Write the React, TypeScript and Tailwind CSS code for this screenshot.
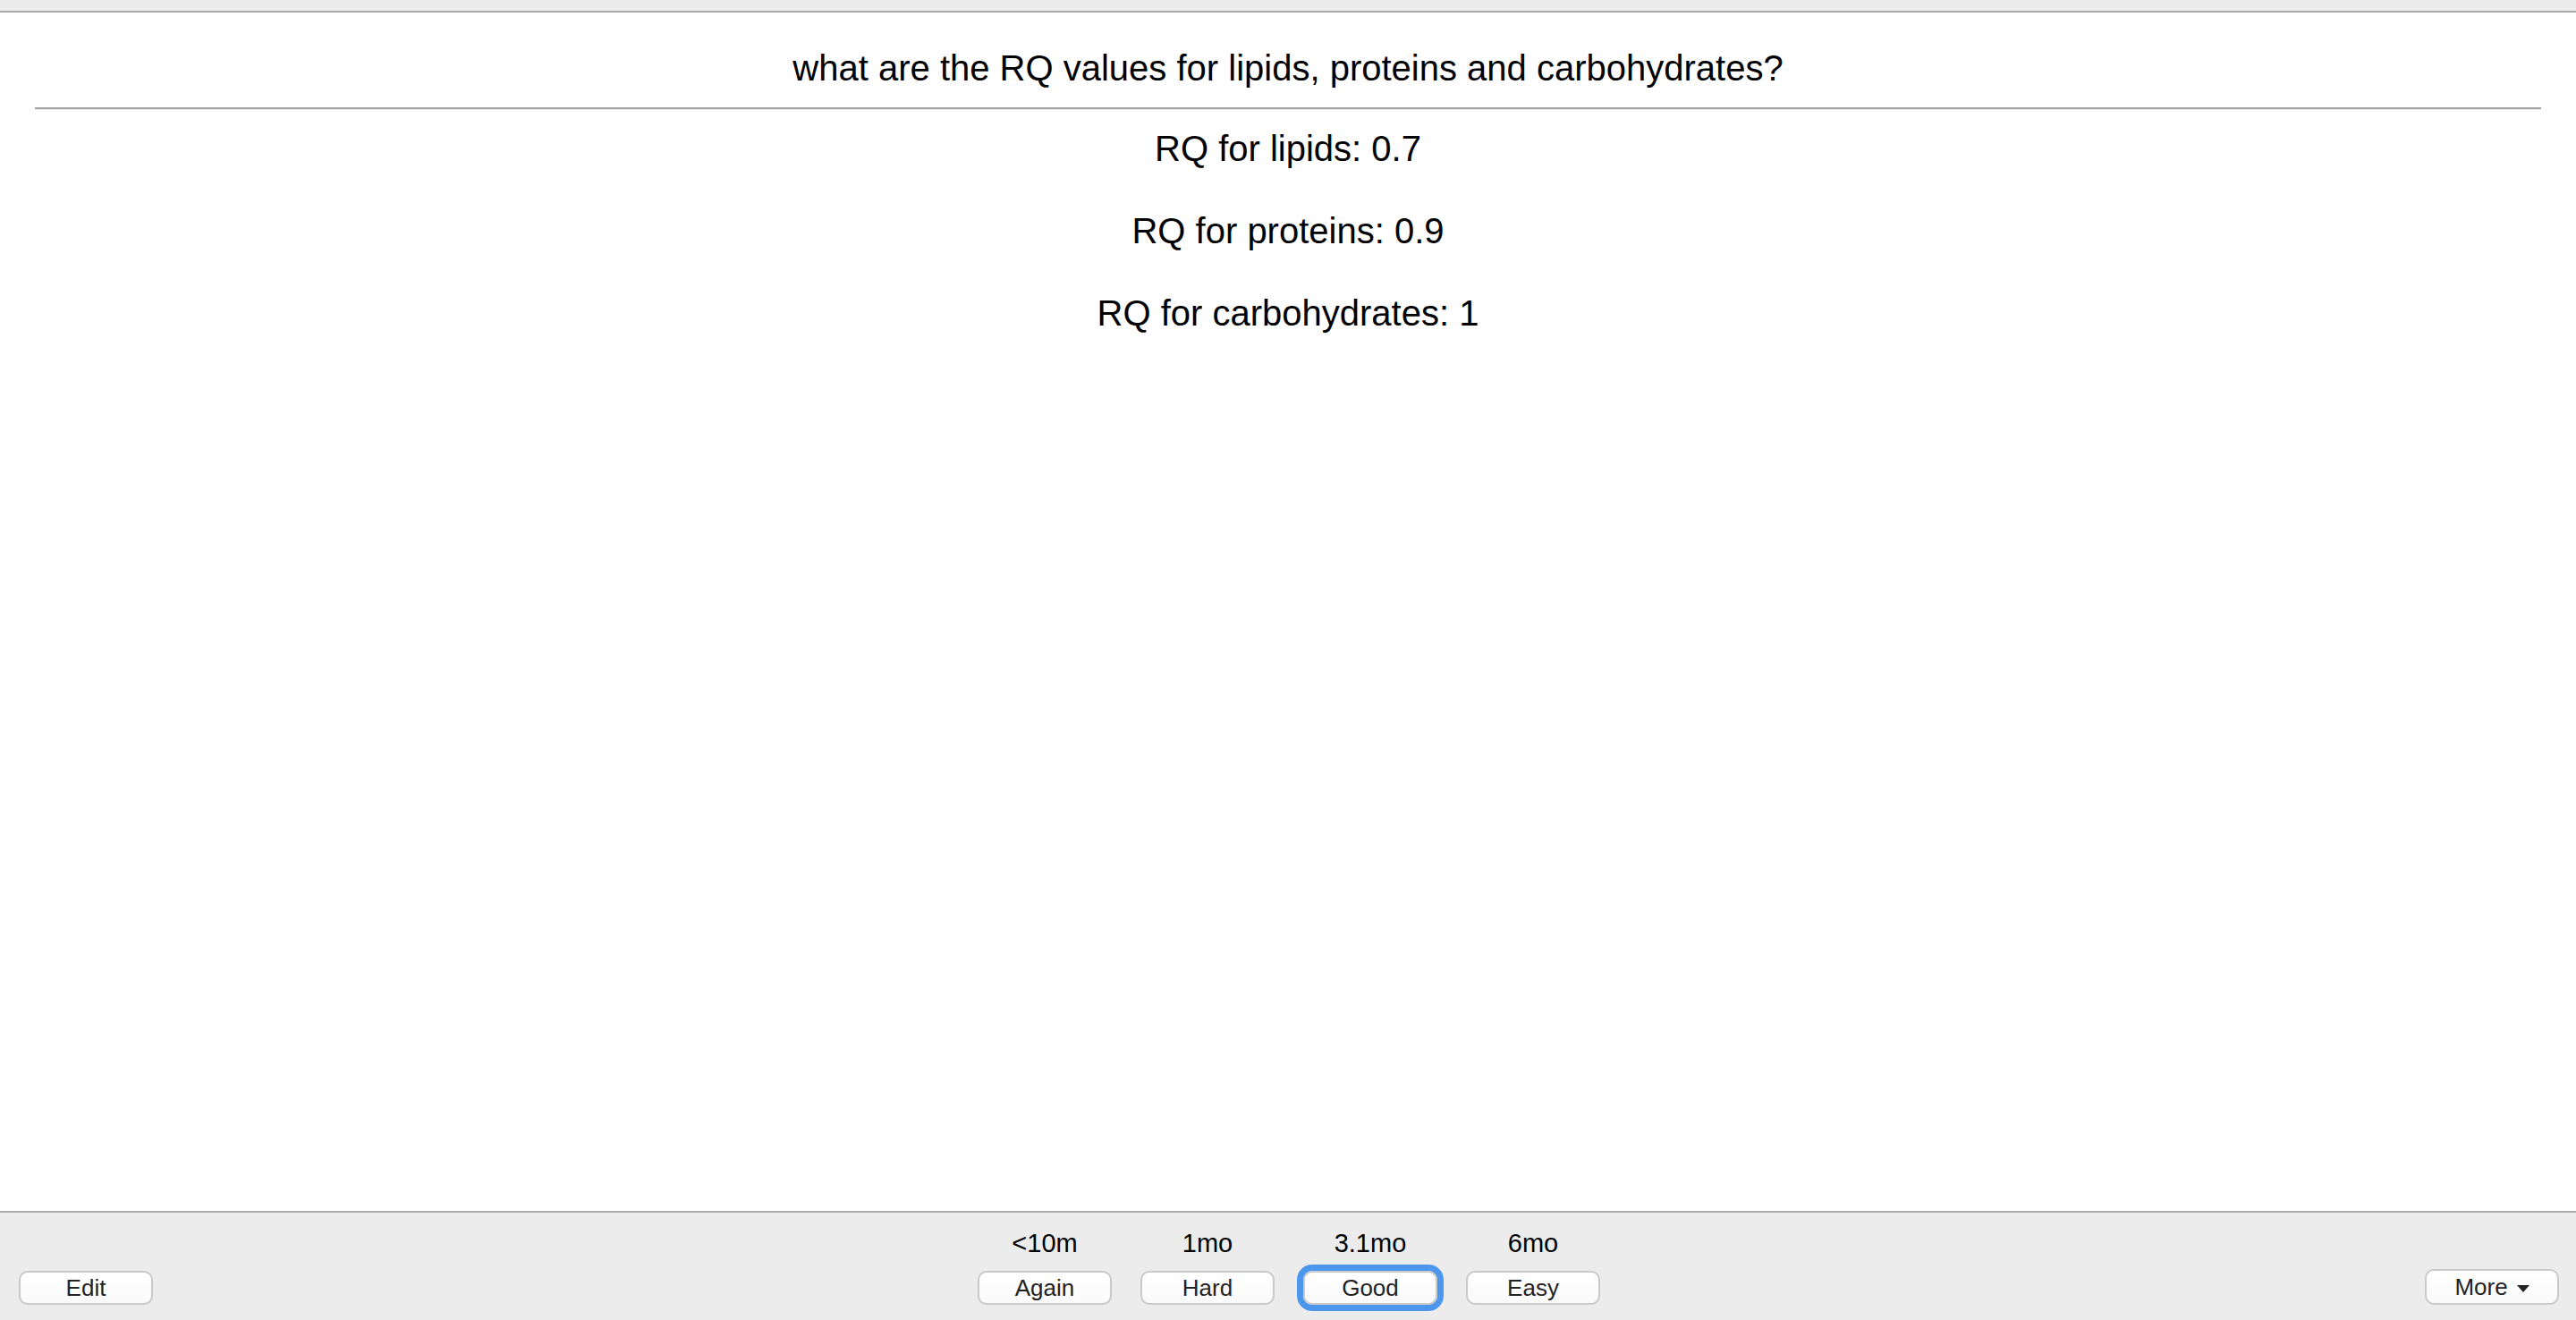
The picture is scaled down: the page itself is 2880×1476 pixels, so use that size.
import React from "react";

const intervals = [
  { id: "again", label: "Again", due: "<10m" },
  { id: "hard", label: "Hard", due: "1mo" },
  { id: "good", label: "Good", due: "3.1mo", focused: true },
  { id: "easy", label: "Easy", due: "6mo" },
];

const answers = [
  "RQ for lipids: 0.7",
  "RQ for proteins: 0.9",
  "RQ for carbohydrates: 1",
];

const btnBase =
  "w-[150px] h-[38px] flex items-center justify-center rounded-[10px] border-2 border-[#cacaca] bg-gradient-to-b from-white to-[#fafafa] text-[26px] leading-[30px] text-[#222]";

export default function App() {
  return (
    <div className="flex flex-col h-[1476px] w-full bg-white font-['Liberation_Sans',Arial,sans-serif] overflow-hidden">
      {/* Top strip */}
      <div className="h-[14px] shrink-0 bg-[#ececec] border-b-2 border-[#a6a6a6]" />

      {/* Card */}
      <div className="flex-1 flex flex-col px-[39px] pt-[39px] text-black">
        <div className="text-center text-[40px] leading-[46px]">
          what are the RQ values for lipids, proteins and carbohydrates?
        </div>
        <div className="mt-[21px] h-[3px] border-t-2 border-[#a3a3a3] border-b border-b-[#ededed]" />
        <div className="mt-[20px] flex flex-col gap-[46px]">
          {answers.map((a) => (
            <div key={a} className="text-center text-[40px] leading-[46px]">
              {a}
            </div>
          ))}
        </div>
      </div>

      {/* Bottom bar */}
      <div className="h-[122px] shrink-0 bg-[#ececec] border-t-2 border-[#acacac] flex items-end justify-between pl-[21px] pr-[19px] pb-[17px]">
        <button className={btnBase}>Edit</button>

        <div className="flex gap-[32px]">
          {intervals.map((it) => (
            <div key={it.id} className="flex flex-col items-center w-[150px]">
              <div className="text-[29px] leading-[30px] text-black">
                {it.due}
              </div>
              <button
                className={`${btnBase} mt-[16px] ${
                  it.focused ? "ring-[7px] ring-[#4c96ee] border-[#a9c9f3]" : ""
                }`}
              >
                {it.label}
              </button>
            </div>
          ))}
        </div>

        <button className={`${btnBase} h-[40px] gap-[10px]`}>
          <span>More</span>
          <svg width="14" height="8" viewBox="0 0 14 8" className="mt-[3px]">
            <path d="M0 0 L14 0 L7 8 Z" fill="#222" />
          </svg>
        </button>
      </div>
    </div>
  );
}
